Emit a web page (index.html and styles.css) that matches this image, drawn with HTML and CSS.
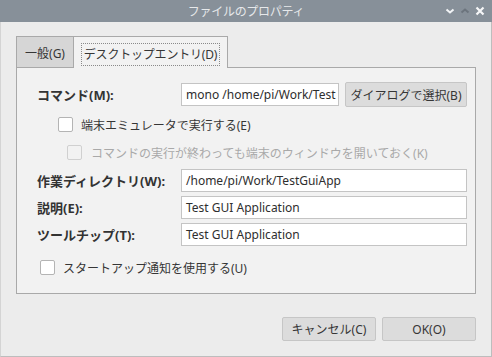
FILE: index.html
```html
<!DOCTYPE html>
<html lang="ja">
<head>
  <meta charset="UTF-8">
  <title>ファイルのプロパティ</title>
  <link rel="stylesheet" href="styles.css">
</head>
<body>

  <div class="window">
    <div class="titlebar">
      <span class="title">ファイルのプロパティ</span>
      <div class="controls">
        <svg width="10" height="8" viewBox="0 0 10 8"><path d="M1.5 2.5 L5 5.5 L8.5 2.5" fill="none" stroke="#f2f4f6" stroke-width="2"/></svg>
        <svg width="10" height="8" viewBox="0 0 10 8"><path d="M1.5 5.5 L5 2.5 L8.5 5.5" fill="none" stroke="#6c747d" stroke-width="2"/></svg>
        <svg width="10" height="10" viewBox="0 0 10 10"><path d="M1.5 1.5 L8.5 8.5 M8.5 1.5 L1.5 8.5" fill="none" stroke="#f6f7f8" stroke-width="2.2"/></svg>
      </div>
    </div>

    <div class="body">
      <div class="tabs">
        <div class="tab">一般(G)</div>
        <div class="tab active"><span class="focus">デスクトップエントリ(D)</span></div>
      </div>

      <div class="panel">
        <div class="field first">
          <label>コマンド(M):</label>
          <div class="input">mono /home/pi/Work/Test</div>
          <button class="btn pick">ダイアログで選択(B)</button>
        </div>

        <div class="check cb-term">
          <span class="box"></span>
          <span>端末エミュレータで実行する(E)</span>
        </div>

        <div class="check cb-keep disabled">
          <span class="box"></span>
          <span>コマンドの実行が終わっても端末のウィンドウを開いておく(K)</span>
        </div>

        <div class="field dir">
          <label>作業ディレクトリ(W):</label>
          <div class="input">/home/pi/Work/TestGuiApp</div>
        </div>

        <div class="field">
          <label>説明(E):</label>
          <div class="input">Test GUI Application</div>
        </div>

        <div class="field">
          <label>ツールチップ(T):</label>
          <div class="input">Test GUI Application</div>
        </div>

        <div class="check cb-startup">
          <span class="box"></span>
          <span>スタートアップ通知を使用する(U)</span>
        </div>
      </div>

      <div class="actions">
        <button class="btn">キャンセル(C)</button>
        <button class="btn">OK(O)</button>
      </div>
    </div>
  </div>

</body>
</html>
```

FILE: styles.css
```css
body {
  margin: 0;
  font-family: 'Noto Sans', 'Noto Sans CJK JP', sans-serif;
  font-size: 12px;
  color: #363636;
  background: #ececec;
}

.window {
  width: 492px;
  height: 357px;
  box-sizing: border-box;
  background: #ececec;
  border-left: 1px solid #d4d4d4;
  border-right: 1px solid #bdbdbd;
  border-bottom: 1px solid #bdbdbd;
  display: flex;
  flex-direction: column;
}

.titlebar {
  height: 22px;
  margin: 0 -1px;
  background: #879099;
  display: flex;
  align-items: center;
  justify-content: center;
  position: relative;
}

.title {
  color: #e6e8ea;
  font-size: 12px;
  letter-spacing: -0.3px;
}

.controls {
  position: absolute;
  right: 7px;
  top: 6px;
  display: flex;
  align-items: center;
  gap: 5px;
}

.body {
  padding: 14px 15px 0 15px;
  display: flex;
  flex-direction: column;
}

.tabs {
  display: flex;
  align-items: flex-end;
}

.tab {
  box-sizing: border-box;
  height: 31px;
  width: 58px;
  background: #d6d6d6;
  border: 1px solid #a9a9a9;
  border-bottom: none;
  display: flex;
  align-items: center;
  justify-content: center;
  padding-top: 2px;
  white-space: nowrap;
}

.tab.active {
  width: 154px;
  height: 32px;
  margin-bottom: -1px;
  border-left: none;
  background: #f2f2f2;
  justify-content: center;
  padding: 5px 0 2px 0;
  position: relative;
  z-index: 1;
}

.focus {
  border: 1px dotted #8a8a8a;
  padding: 1px 2px 2px 2px;
  letter-spacing: -0.2px;
}

.panel {
  box-sizing: border-box;
  height: 227px;
  background: #f2f2f2;
  border: 1px solid #a9a9a9;
  padding: 14px 8px 0 20px;
  display: flex;
  flex-direction: column;
}

.field {
  display: grid;
  grid-template-columns: 144px 1fr;
  align-items: center;
  margin-top: 4px;
}

.field.first {
  grid-template-columns: 138px 158px 122px;
  column-gap: 6px;
  margin-top: 0;
}

.field.dir {
  margin-top: 9px;
}

.field label {
  font-weight: bold;
  font-size: 13px;
  color: #333;
  white-space: nowrap;
}

.input {
  box-sizing: border-box;
  height: 23px;
  background: #fff;
  border: 1px solid #c4c4c4;
  padding: 0 2px 0 4px;
  line-height: 21px;
  font-size: 12px;
  color: #2e2e2e;
  white-space: nowrap;
  overflow: hidden;
}

.btn {
  box-sizing: border-box;
  height: 24px;
  background: #dcdcdc;
  border: 1px solid #c6c6c6;
  border-radius: 2px;
  font-family: inherit;
  font-size: 12px;
  color: #363636;
  padding: 0;
  white-space: nowrap;
}

.btn.pick {
  height: 25px;
}

.check {
  display: flex;
  align-items: center;
  gap: 8px;
  height: 15px;
  white-space: nowrap;
}

.box {
  box-sizing: border-box;
  width: 15px;
  height: 15px;
  background: #fff;
  border: 1px solid #b4b4b4;
  border-radius: 2px;
}

.cb-term {
  margin: 10px 0 0 21px;
}

.cb-keep {
  margin: 13px 0 0 30px;
  gap: 9px;
}

.cb-startup {
  margin: 14px 0 0 3px;
}

.check.disabled {
  color: #a9a9a9;
}

.check.disabled .box {
  background: #f2f2f2;
  border-color: #d0d0d0;
}

.actions {
  display: flex;
  justify-content: flex-end;
  gap: 6px;
  margin-top: 23px;
}

.actions .btn {
  width: 94px;
}
```
